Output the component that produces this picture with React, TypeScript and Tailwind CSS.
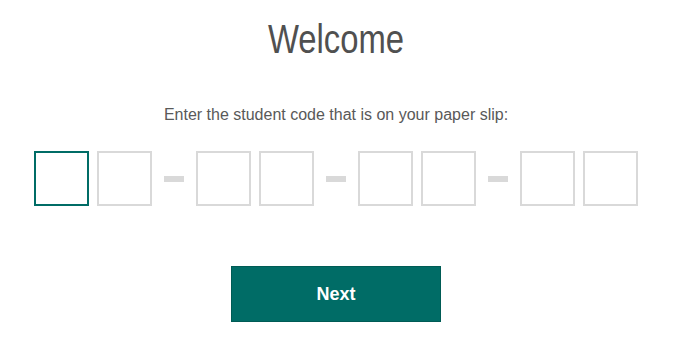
import React, { useState } from 'react';

const GROUPS = [2, 2, 2, 2];

export default function App() {
  const [code, setCode] = useState<string[]>(Array(8).fill(''));

  const setChar = (i: number, v: string) => {
    const next = [...code];
    next[i] = v.slice(-1).toUpperCase();
    setCode(next);
  };

  let idx = 0;

  return (
    <div className="min-h-screen bg-white">
      <div
        className="w-[672px] flex flex-col items-center"
        style={{ fontFamily: '"Liberation Sans", Arial, sans-serif' }}
      >
        {/* title face is a narrow grotesque; squeeze Liberation Sans to match */}
        <h1 className="mt-[16px] text-[40px] leading-[46px] font-normal text-[#505050] scale-x-[0.82]">
          Welcome
        </h1>

        <p className="mt-[41px] text-[16px] leading-[24px] text-[#595959]">
          Enter the student code that is on your paper slip:
        </p>

        <div className="mt-[24px] flex items-center">
          {GROUPS.map((size, g) => (
            <React.Fragment key={g}>
              {g > 0 && <div className="mx-[12px] h-[6px] w-[20px] bg-[#d9d9d9]" />}
              <div className="flex gap-[8px]">
                {Array.from({ length: size }).map(() => {
                  const i = idx++;
                  return (
                    <input
                      key={i}
                      value={code[i]}
                      onChange={(e) => setChar(i, e.target.value)}
                      maxLength={2}
                      className={`h-[55px] w-[55px] border-2 bg-white text-center text-[24px] text-[#333] outline-none ${
                        i === 0 ? 'border-[#006c66]' : 'border-[#d9d9d9] focus:border-[#006c66]'
                      }`}
                    />
                  );
                })}
              </div>
            </React.Fragment>
          ))}
        </div>

        <button
          type="button"
          className="mt-[60px] h-[56px] w-[210px] border border-[#005b55] bg-[#006c66] text-[18px] font-bold text-white"
        >
          Next
        </button>
      </div>
    </div>
  );
}
